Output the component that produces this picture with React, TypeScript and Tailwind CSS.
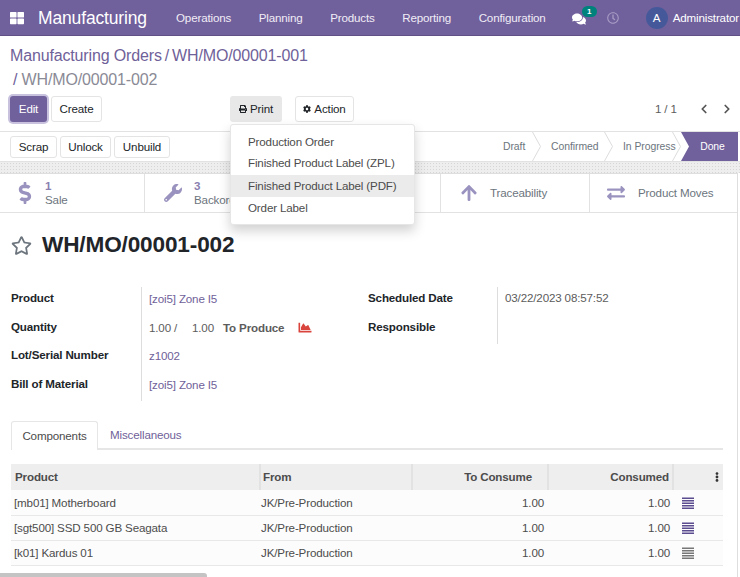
import { ChevronLeft, ChevronRight } from "lucide-react";
import {
  FaArrowUp,
  FaChartArea,
  FaCog,
  FaComments,
  FaDollarSign,
  FaEllipsisV,
  FaExchangeAlt,
  FaPrint,
  FaRegClock,
  FaRegStar,
  FaThLarge,
  FaWrench,
} from "react-icons/fa";

const NAV = ["Operations", "Planning", "Products", "Reporting", "Configuration"];
const PRINT_ITEMS = [
  { label: "Production Order", cls: "h-[21px]" },
  { label: "Finished Product Label (ZPL)", cls: "h-[22px]" },
  { label: "Finished Product Label (PDF)", cls: "h-[22px] mt-[1px] bg-[#ebebeb]" },
  { label: "Order Label", cls: "h-[22px]" },
];
const ROWS = [
  { name: "[mb01] Motherboard", iconCls: "text-[#5b4b8f]" },
  { name: "[sgt500] SSD 500 GB Seagata", iconCls: "text-[#5b4b8f]" },
  { name: "[k01] Kardus 01", iconCls: "text-[#777777]" },
];

function Btn({ label, className = "" }: { label: string; className?: string }) {
  return (
    <button
      className={`h-[22px] shrink-0 rounded-[3px] border border-[#e4e4e4] bg-white text-[#212529] ${className}`}
    >
      {label}
    </button>
  );
}

function ListIcon({ className }: { className: string }) {
  return (
    <svg viewBox="0 0 12 12" className={`h-3 w-3 ${className}`} fill="currentColor">
      <rect x="0" y="0.5" width="12" height="1.5" />
      <rect x="0" y="3" width="12" height="1.5" />
      <rect x="0" y="5.5" width="12" height="1.5" />
      <rect x="0" y="8" width="12" height="1.5" />
      <rect x="0" y="10.5" width="12" height="1.5" />
    </svg>
  );
}

function Step({ label, className }: { label: string; className: string }) {
  return (
    <div className={`relative flex h-full shrink-0 items-center whitespace-nowrap ${className}`}>
      {label}
      {/* chevron separator */}
      <svg viewBox="0 0 9 29" className="absolute right-0 top-0 h-[29px] w-[9px]" fill="none" stroke="#dcdcdc">
        <path d="M0.5 0 L8.5 14.5 L0.5 29" />
      </svg>
    </div>
  );
}

export default function App() {
  return (
    <div className="relative h-[577px] w-[740px] overflow-hidden whitespace-nowrap bg-white font-['Liberation_Sans',Arial,sans-serif] text-[11.6px] leading-4 tracking-[-0.15px] text-[#4c4c4c]">
      {/* navbar */}
      <header className="flex h-9 items-center border-b border-[#5f5088] bg-[#70609c] text-white [&>*]:shrink-0">
        <FaThLarge className="ml-[10px] h-[14px] w-[14px]" />
        <span className="ml-[14px] w-[138px] text-[17.5px]">Manufacturing</span>
        <nav className="flex gap-[27.5px] text-[#f0edf6]">
          {NAV.map((n) => (
            <span key={n}>{n}</span>
          ))}
        </nav>
        <div className="relative ml-[26px] h-full w-[35px]">
          <FaComments className="absolute left-0 top-[12px] h-[14px] w-[14px]" />
          <span className="absolute left-[10px] top-[6px] flex h-[11px] w-[15px] items-center justify-center rounded-full bg-[#00827c] text-[8px] font-bold">
            1
          </span>
        </div>
        <FaRegClock className="h-3 w-3 text-[#a79cc4]" />
        <span className="ml-[27px] flex h-[22px] w-[22px] items-center justify-center rounded-full bg-[#45599a]">
          A
        </span>
        <span className="ml-[5px]">Administrator</span>
      </header>

      {/* control panel */}
      <section className="h-[95px] px-[10px] pt-2">
        <div className="text-base leading-6 text-[#6f6199]">
          <div>
            Manufacturing Orders<span className="mx-[3px]">/</span>WH/MO/00001-001
          </div>
          <div className="pl-[3px] text-[#8a8a96]">
            <span className="text-[#6f6199]">/</span> WH/MO/00001-002
          </div>
        </div>
        <div className="mt-1 flex h-[26px] items-center [&>*]:shrink-0">
          <button className="h-[26px] w-[37px] rounded-[3px] bg-[#70609c] text-white shadow-[0_0_0_2px_#c9c2de]">
            Edit
          </button>
          <button className="ml-[4px] h-[26px] w-[51px] rounded-[3px] border border-[#e4e4e4] text-[#212529]">
            Create
          </button>
          <button className="ml-[128px] flex h-[26px] w-[52px] items-center justify-center gap-[3px] rounded-[3px] bg-[#e8e8e8] text-[#212529]">
            <FaPrint className="h-2 w-2" /> Print
          </button>
          <button className="ml-[13px] flex h-[26px] w-[59px] items-center justify-center gap-[3px] rounded-[3px] border border-[#e4e4e4] text-[#212529]">
            <FaCog className="h-2 w-2" /> Action
          </button>
          <span className="ml-[301px] w-[21px] text-[#5c5c5c]">1 / 1</span>
          <ChevronLeft className="ml-[21px] h-[14px] w-[14px] text-[#555555]" strokeWidth={3} />
          <ChevronRight className="ml-[9px] h-[14px] w-[14px] text-[#555555]" strokeWidth={3} />
        </div>
      </section>

      {/* status bar */}
      <section className="flex h-[31px] items-center border-y border-[#e2e2e2] pl-[10px]">
        <Btn label="Scrap" className="w-[47px]" />
        <Btn label="Unlock" className="ml-[3px] w-[51px]" />
        <Btn label="Unbuild" className="ml-[3px] w-[56px]" />
        <div className="ml-auto flex h-full text-[10.4px] tracking-[-0.05px] text-[#6c757d]">
          <Step label="Draft" className="w-[51px] pl-[13px]" />
          <Step label="Confirmed" className="w-[72px] pl-[10px]" />
          <Step label="In Progress" className="w-[68px] pl-[10px]" />
          <div className="flex h-full w-[57px] items-center justify-center bg-[#70609c] pl-[6px] text-white [clip-path:polygon(0_0,100%_0,100%_100%,0_100%,8px_50%)]">
            Done
          </div>
          <div className="w-[2px]" />
        </div>
      </section>

      {/* dotted strip */}
      <div className="h-[11px] bg-[#eeeeee] bg-[radial-gradient(#d6d6d6_0.6px,transparent_0.7px)] bg-size-[3px_3px]" />

      {/* sheet */}
      <main className="mr-[2px] h-[410px] border-r border-t border-[#dedede]">
        <div className="flex h-[39px] border-b border-[#e2e2e2] text-[#6c757d]">
          <div className="flex w-[145px] items-center border-r border-[#e2e2e2] pl-[18px]">
            <FaDollarSign className="h-[22px] w-[14px] text-[#9b93bf]" />
            <div className="ml-[13px] leading-[14px]">
              <div className="font-bold text-[#8a80b0]">1</div>
              <div>Sale</div>
            </div>
          </div>
          <div className="flex w-[148px] items-center border-r border-[#e2e2e2] pl-[19px]">
            <FaWrench className="h-[18px] w-[18px] text-[#9b93bf]" />
            <div className="ml-[12px] leading-[14px]">
              <div className="font-bold text-[#8a80b0]">3</div>
              <div>Backorders</div>
            </div>
          </div>
          <div className="w-[148px] border-r border-[#e2e2e2]" />
          <div className="flex w-[149px] items-center border-r border-[#e2e2e2] pl-[19px]">
            <FaArrowUp className="h-[18px] w-[18px] text-[#9b93bf]" />
            <span className="ml-[12px]">Traceability</span>
          </div>
          <div className="flex flex-1 items-center pl-[16px]">
            <FaExchangeAlt className="h-[18px] w-5 text-[#9b93bf]" />
            <span className="ml-[12px]">Product Moves</span>
          </div>
        </div>

        <div className="flex items-center pl-[11px] pt-[18px]">
          <FaRegStar className="h-[21px] w-[21px] text-[#6c757d]" />
          <h1 className="ml-[10px] text-[22.6px] font-bold leading-7 text-[#212529]">WH/MO/00001-002</h1>
        </div>

        {/* form groups */}
        <div className="mt-[28px] flex pl-[11px]">
          <div className="grid w-[357px] grid-cols-[130px_1fr] auto-rows-[28.6px]">
            <div className="pt-[3px] font-bold text-[#212529]">Product</div>
            <div className="border-l border-[#dddddd] pl-[7px] pt-1 text-[#6f6199]">[zoi5] Zone I5</div>
            <div className="pt-[3px] font-bold text-[#212529]">Quantity</div>
            <div className="flex border-l border-[#dddddd] pl-[7px] pt-1 text-[#5c5c5c]">
              <span className="w-[43px]">1.00 /</span>
              <span className="w-[31px]">1.00</span>
              <span className="w-[75px] font-bold">To Produce</span>
              <FaChartArea className="mt-[1px] h-[13px] w-[14px] text-[#d9453d]" />
            </div>
            <div className="pt-[3px] font-bold text-[#212529]">Lot/Serial Number</div>
            <div className="border-l border-[#dddddd] pl-[7px] pt-1 text-[#6f6199]">z1002</div>
            <div className="pt-[3px] font-bold text-[#212529]">Bill of Material</div>
            <div className="border-l border-[#dddddd] pl-[7px] pt-1 text-[#6f6199]">[zoi5] Zone I5</div>
          </div>
          <div className="grid w-[300px] grid-cols-[129px_1fr] auto-rows-[28.6px]">
            <div className="pt-[3px] font-bold text-[#212529]">Scheduled Date</div>
            <div className="border-l border-[#dddddd] pl-[7px] pt-[3px] text-[#5c5c5c]">03/22/2023 08:57:52</div>
            <div className="pt-[3px] font-bold text-[#212529]">Responsible</div>
            <div className="border-l border-[#dddddd]" />
          </div>
        </div>

        {/* tabs */}
        <div className="ml-[11px] mt-[20px] flex h-[29px] w-[712px] border-b-2 border-[#e6e6e6]">
          <div className="mb-[-2px] flex h-[29px] w-[87px] items-center justify-center rounded-t-[3px] border border-b-0 border-[#e6e6e6] bg-white text-[#4c4c4c]">
            Components
          </div>
          <div className="ml-[12px] flex items-center text-[#6f6199]">Miscellaneous</div>
        </div>

        <table className="ml-[11px] mt-[14px] w-[712px] table-fixed border-collapse">
          <thead>
            <tr className="h-[26px] bg-[#eeeeee] font-bold text-[#4c4c4c]">
              <th className="w-[249px] border-r-2 border-[#e2e2e2] pl-1 text-left">Product</th>
              <th className="w-[152px] border-r-2 border-[#e2e2e2] pl-[2px] text-left">From</th>
              <th className="w-[136px] border-r-2 border-[#e2e2e2] pr-[15px] text-right">To Consume</th>
              <th className="w-[125px] border-r-2 border-[#e2e2e2] pr-[3px] text-right">Consumed</th>
              <th className="pr-[3px] text-right">
                <FaEllipsisV className="ml-auto h-[10px] w-[6px] text-[#333333]" />
              </th>
            </tr>
          </thead>
          <tbody>
            {ROWS.map((r) => (
              <tr key={r.name} className="h-[25px] border-b border-[#e8e8e8] bg-[#fcfcfc] text-[#4c4c4c]">
                <td className="pl-[3px]">{r.name}</td>
                <td className="pl-[1px]">JK/Pre-Production</td>
                <td className="pr-[4px] text-right">1.00</td>
                <td className="pr-[3px] text-right">1.00</td>
                <td className="pl-[9px]">
                  <ListIcon className={r.iconCls} />
                </td>
              </tr>
            ))}
          </tbody>
        </table>
      </main>

      {/* print dropdown */}
      <div className="absolute left-[230px] top-[124px] h-[101px] w-[185px] rounded-[3px] border border-[#e6e6e6] bg-white py-[6px] shadow-[0_6px_12px_rgba(0,0,0,0.18)]">
        {PRINT_ITEMS.map((i) => (
          <div key={i.label} className={`flex items-center pl-[17px] text-[#4c4c4c] ${i.cls}`}>
            {i.label}
          </div>
        ))}
      </div>

      {/* horizontal scrollbar thumb */}
      <div className="absolute bottom-0 left-0 h-1 w-[207px] rounded-tr-[3px] bg-[#c4c4c4]" />
    </div>
  );
}
